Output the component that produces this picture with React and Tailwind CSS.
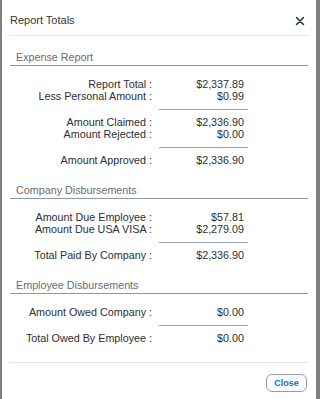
import React from "react";

const font = { fontFamily: '"Liberation Sans", Arial, sans-serif' };

function Row({ label, value }) {
  return (
    <div className="flex h-[12px] items-center text-[10.75px] leading-[12px] text-[#2a2f35]">
      <div className="w-[142px] text-right whitespace-nowrap">{label}</div>
      <div className="w-[92px] text-right whitespace-nowrap">{value}</div>
    </div>
  );
}

function Line() {
  return <div className="ml-[149px] mt-[7px] mb-[6px] h-px w-[89px] bg-[#9aa6b5]" />;
}

function Section({ title, children, first }) {
  return (
    <div className={first ? "mt-[13px]" : "mt-[16px]"}>
      <div className="h-[17px] border-b border-[#8a98a9] pl-[6px] text-[10.75px] leading-[16px] text-[#6a6d70]">
        {title}
      </div>
      <div className="mt-[12px]">{children}</div>
    </div>
  );
}

export default function App() {
  return (
    <div className="flex h-[399px] w-[320px] overflow-hidden bg-[#7c7f84]" style={font}>
      <div className="ml-[2px] flex h-full w-[314px] flex-col bg-white px-[8px]">
        <div className="flex h-[36px] items-center justify-between border-b border-[#e4e4e4] pt-[6px]">
          <span className="text-[11px] text-[#32363a]">Report Totals</span>
          <svg width="10" height="10" viewBox="0 0 10 10" className="mr-[3px]">
            <path d="M1.5 1.5 L8.5 8.5 M8.5 1.5 L1.5 8.5" stroke="#1d2d3e" strokeWidth="1.5" strokeLinecap="round" />
          </svg>
        </div>
        <Section title="Expense Report" first>
          <Row label="Report Total :" value="$2,337.89" />
          <Row label="Less Personal Amount :" value="$0.99" />
          <Line />
          <Row label="Amount Claimed :" value="$2,336.90" />
          <Row label="Amount Rejected :" value="$0.00" />
          <Line />
          <Row label="Amount Approved :" value="$2,336.90" />
        </Section>
        <Section title="Company Disbursements">
          <Row label="Amount Due Employee :" value="$57.81" />
          <Row label="Amount Due USA VISA :" value="$2,279.09" />
          <Line />
          <Row label="Total Paid By Company :" value="$2,336.90" />
        </Section>
        <Section title="Employee Disbursements">
          <Row label="Amount Owed Company :" value="$0.00" />
          <Line />
          <Row label="Total Owed By Employee :" value="$0.00" />
        </Section>
        <div className="mt-[18px] h-px bg-[#e4e4e4]" />
        <div className="mt-[11px] flex justify-end pr-[1px]">
          <button className="h-[18px] w-[41px] rounded-[6px] border border-[#8fa0b3] bg-white text-[9px] font-bold leading-none text-[#0a6ed1]">
            Close
          </button>
        </div>
      </div>
    </div>
  );
}
